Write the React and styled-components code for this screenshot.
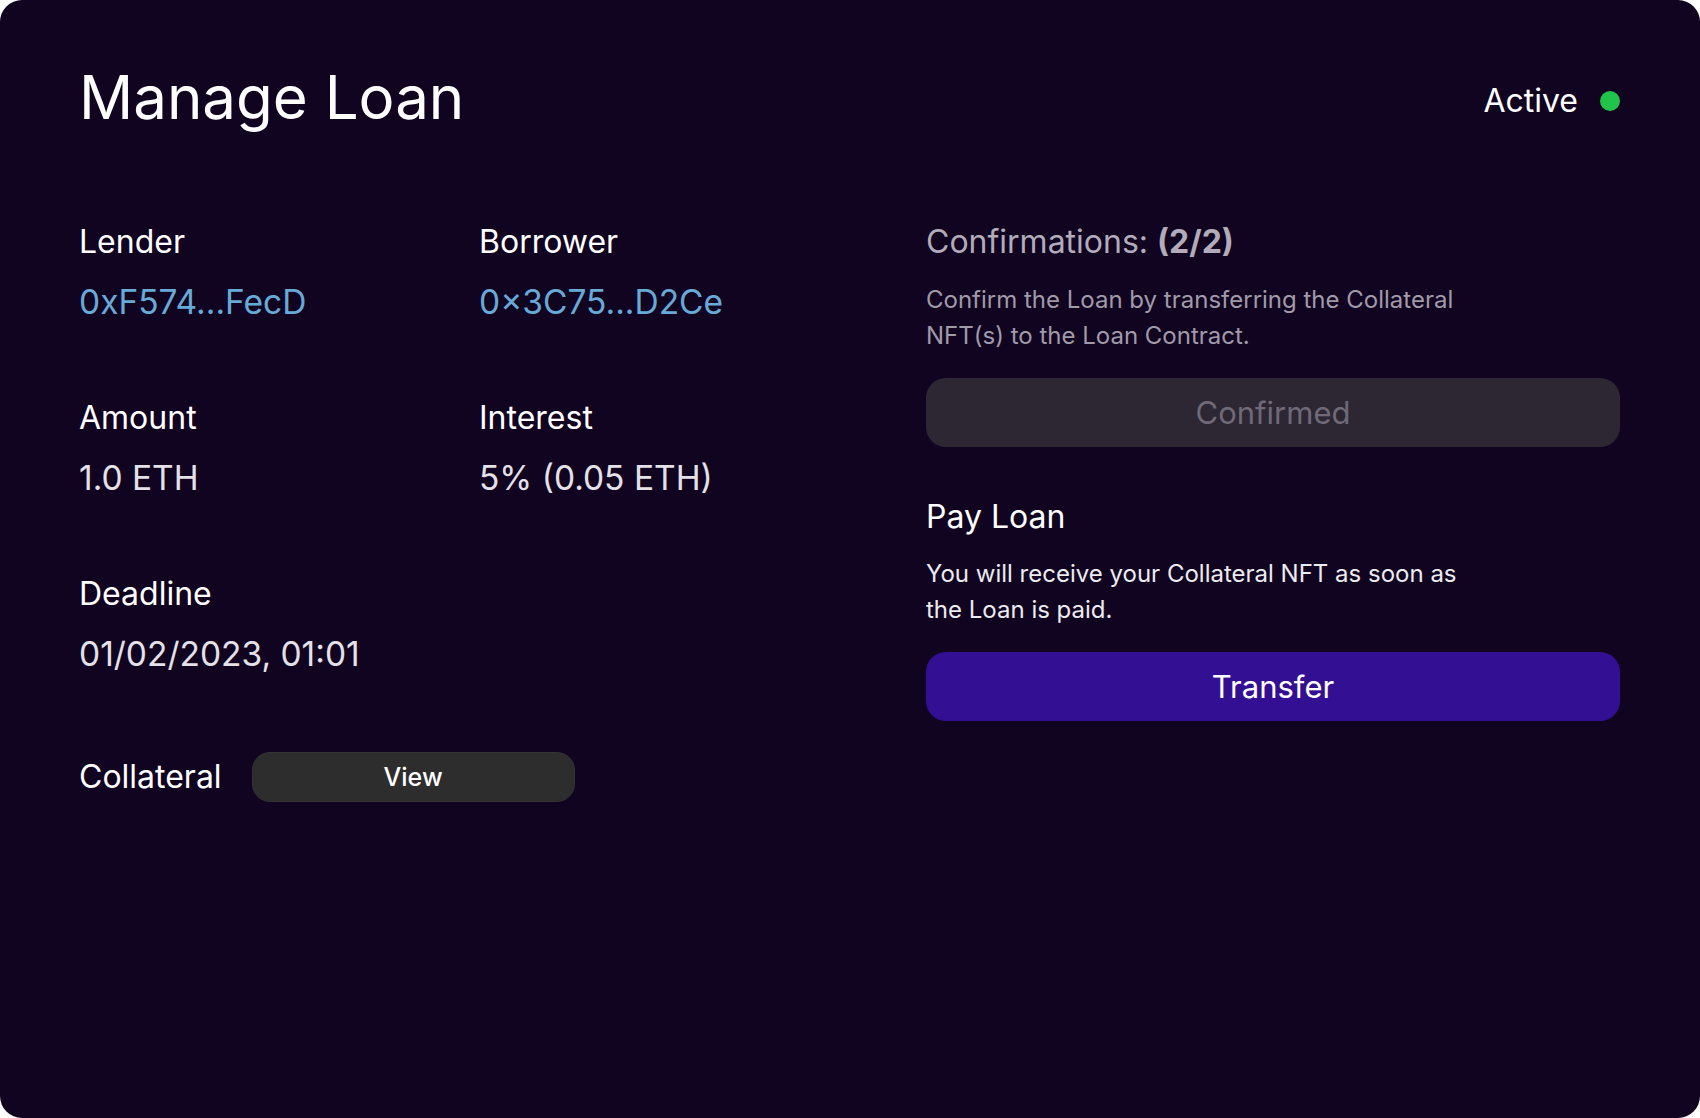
import React from "react";
import styled, { createGlobalStyle } from "styled-components";

const GlobalStyle = createGlobalStyle`
  html, body {
    margin: 0;
    padding: 0;
    background: #ffffff;
  }
  * {
    box-sizing: border-box;
  }
`;

const Card = styled.main`
  width: 1700px;
  height: 1118px;
  background: #110421;
  border-radius: 22px;
  padding: 61px 80px 0 79px;
  font-family: Inter, "Noto Sans", sans-serif;
  color: #ffffff;
  overflow: hidden;
`;

const Header = styled.header`
  display: flex;
  justify-content: space-between;
  align-items: center;
`;

const Title = styled.h1`
  margin: 0;
  font-size: 60px;
  line-height: 72px;
  font-weight: 400;
`;

const Status = styled.div`
  display: flex;
  align-items: center;
  gap: 22px;
  font-size: 32px;
  line-height: 38px;
  font-weight: 400;
  margin-top: 8px;
`;

const Dot = styled.span`
  width: 20px;
  height: 20px;
  border-radius: 50%;
  background: #22c34a;
`;

const Body = styled.section`
  display: flex;
  margin-top: 91px;
`;

const Details = styled.div`
  flex: 1;
  display: grid;
  grid-template-columns: 400px 400px;
  row-gap: 79px;
  align-content: start;
`;

const Field = styled.div`
  display: flex;
  flex-direction: column;
  gap: 23px;
`;

const Label = styled.span`
  font-size: 32px;
  line-height: 36px;
  font-weight: 400;
  color: #ffffff;
`;

const Value = styled.span`
  font-size: 33.5px;
  line-height: 38px;
  color: ${({ $link }) => ($link ? "#67aad8" : "#e4e1e8")};
`;

const CollateralRow = styled.div`
  grid-column: 1 / -1;
  display: flex;
  align-items: center;
  gap: 30px;
`;

const ViewButton = styled.button`
  width: 323px;
  height: 50px;
  border: 1px solid #333235;
  border-radius: 18px;
  background: #2d2d2d;
  color: #ffffff;
  font-family: inherit;
  font-size: 25px;
  font-weight: 500;
`;

const Actions = styled.div`
  width: 694px;
  display: flex;
  flex-direction: column;
`;

const Heading = styled.h2`
  margin: 0;
  font-size: 32px;
  line-height: 36px;
  font-weight: 400;
  color: ${({ $muted }) => ($muted ? "#b2acba" : "#ffffff")};

  b {
    font-weight: 700;
  }
`;

const Note = styled.p`
  margin: ${({ $top }) => $top}px 0 0;
  max-width: 548px;
  font-size: 24px;
  line-height: 36px;
  color: ${({ $muted }) => ($muted ? "#a09aa9" : "#ecebef")};
`;

const ActionButton = styled.button`
  margin-top: 24px;
  height: 69px;
  border: none;
  border-radius: 20px;
  font-family: inherit;
  font-size: 31px;
  font-weight: 400;
  background: ${({ $done }) => ($done ? "#2c2733" : "#330f93")};
  color: ${({ $done }) => ($done ? "#6f6978" : "#ffffff")};
`;

const Section = styled.div`
  display: flex;
  flex-direction: column;
  margin-top: ${({ $top }) => $top || 0}px;
`;

export default function App() {
  return (
    <>
      <GlobalStyle />
      <Card>
        <Header>
          <Title>Manage Loan</Title>
          <Status>
            Active
            <Dot />
          </Status>
        </Header>

        <Body>
          <Details>
            <Field>
              <Label>Lender</Label>
              <Value $link>0xF574...FecD</Value>
            </Field>
            <Field>
              <Label>Borrower</Label>
              <Value $link>0×3C75...D2Ce</Value>
            </Field>
            <Field>
              <Label>Amount</Label>
              <Value>1.0 ETH</Value>
            </Field>
            <Field>
              <Label>Interest</Label>
              <Value>5% (0.05 ETH)</Value>
            </Field>
            <Field>
              <Label>Deadline</Label>
              <Value>01/02/2023, 01:01</Value>
            </Field>
            <div />
            <CollateralRow>
              <Label>Collateral</Label>
              <ViewButton>View</ViewButton>
            </CollateralRow>
          </Details>

          <Actions>
            <Section>
              <Heading $muted>
                Confirmations: <b>(2/2)</b>
              </Heading>
              <Note $muted $top={22}>
                Confirm the Loan by transferring the Collateral NFT(s) to the Loan Contract.
              </Note>
              <ActionButton $done disabled>
                Confirmed
              </ActionButton>
            </Section>
            <Section $top={52}>
              <Heading>Pay Loan</Heading>
              <Note $top={21}>
                You will receive your Collateral NFT as soon as the Loan is paid.
              </Note>
              <ActionButton>Transfer</ActionButton>
            </Section>
          </Actions>
        </Body>
      </Card>
    </>
  );
}
